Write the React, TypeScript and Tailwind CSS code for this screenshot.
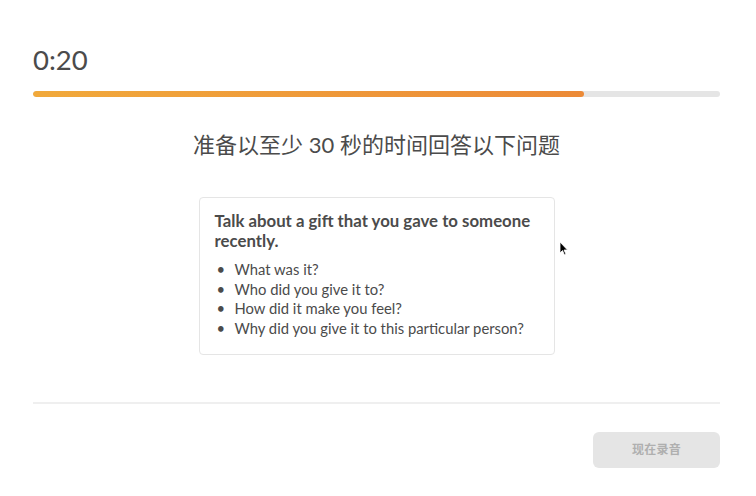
import React from "react";

const questions = [
  "What was it?",
  "Who did you give it to?",
  "How did it make you feel?",
  "Why did you give it to this particular person?",
];

export default function App() {
  return (
    <div
      className="relative w-[756px] h-[496px] bg-white text-[#4b4b4b] overflow-hidden"
      style={{ fontFamily: 'Lato, "Noto Sans CJK SC", sans-serif' }}
    >
      <div className="pl-[33px] pr-[36px] pt-[43px]">
        {/* Timer */}
        <div className="text-[27.5px] leading-[34px] text-[#4b4b4b]">0:20</div>

        {/* Progress */}
        <div className="mt-[14px] h-[6px] w-full rounded-full bg-[#e5e5e5] overflow-hidden">
          <div className="h-full w-[80.2%] rounded-full bg-gradient-to-r from-[#f1a93b] to-[#ec8a37]" />
        </div>

        {/* Prompt */}
        <div className="mt-[33px] text-center text-[22px] leading-[30px] text-[#4b4b4b]">
          准备以至少 30 秒的时间回答以下问题
        </div>

        {/* Card */}
        <div className="mt-[37px] flex justify-center">
          <div className="w-[356px] h-[158px] border border-[#e5e5e5] rounded-[4px] px-[15px] pt-[13px]">
            <div className="text-[16.8px] leading-[20px] font-bold text-[#4b4b4b]">
              Talk about a gift that you gave to someone recently.
            </div>
            <ul className="mt-[9px] text-[14.8px] leading-[19.5px] text-[#4b4b4b]">
              {questions.map((q) => (
                <li key={q} className="flex">
                  <span className="w-[20px] pl-[2px]">•</span>
                  <span>{q}</span>
                </li>
              ))}
            </ul>
          </div>
        </div>

        {/* Divider */}
        <div className="mt-[47px] h-[2px] bg-[#efefef]" />

        {/* Footer */}
        <div className="mt-[28px] flex justify-end">
          <button className="w-[127px] h-[36px] rounded-[6px] bg-[#e5e5e5] text-[12px] font-bold text-[#afafaf] tracking-wide">
            现在录音
          </button>
        </div>
      </div>

      {/* Mouse cursor */}
      <svg className="absolute left-[559px] top-[241px]" width="10" height="15" viewBox="0 0 10 15">
        <path d="M1 1 L1 12 L3.5 9.5 L5.5 14 L7 13.3 L5 9 L8.5 9 Z" fill="#000" stroke="#fff" strokeWidth="0.8" />
      </svg>
    </div>
  );
}
